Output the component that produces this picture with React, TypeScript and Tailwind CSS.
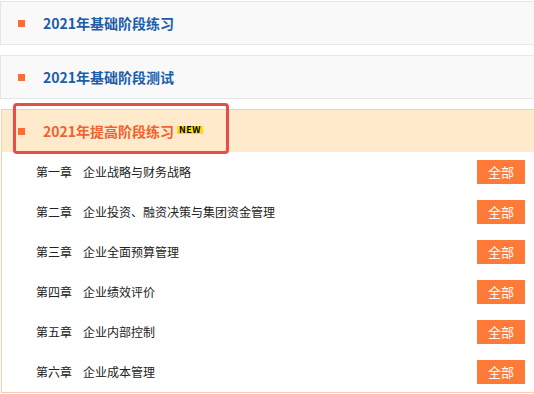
const chapters = [
  ['第一章', '企业战略与财务战略'],
  ['第二章', '企业投资、融资决策与集团资金管理'],
  ['第三章', '企业全面预算管理'],
  ['第四章', '企业绩效评价'],
  ['第五章', '企业内部控制'],
  ['第六章', '企业成本管理'],
];

const font = { fontFamily: '"Microsoft YaHei", "Noto Sans CJK SC", "Liberation Sans", sans-serif' };

function Panel({ title }: { title: string }) {
  return (
    <div className="flex h-[44px] items-center border-y border-l border-[#e6e6e6] bg-[#f9f9f9]">
      <span className="ml-[17px] h-[7px] w-[7px] bg-[#ff6a36]" />
      <span className="ml-[18px] text-[14px] font-bold text-[#1c5daa]">{title}</span>
    </div>
  );
}

export default function App() {
  return (
    <div className="w-[534px] overflow-hidden bg-white pt-px" style={font}>
      <Panel title="2021年基础阶段练习" />
      <div className="h-[10px]" />
      <Panel title="2021年基础阶段测试" />
      <div className="h-[10px]" />
      <div className="ml-px border-y border-l border-[#fbcdae]">
        <div className="relative flex h-[42px] items-center bg-[#ffebcc]">
          <span className="ml-[16px] h-[7px] w-[7px] bg-[#ff6a36]" />
          <span className="ml-[18px] text-[14px] font-bold text-[#f2622e]">2021年提高阶段练习</span>
          <span className="ml-[3px] mt-[-3px] bg-[#ffe000] px-[2px] text-[9px] font-bold leading-[8px] tracking-[0.5px] text-black">NEW</span>
          <div className="absolute left-[11px] top-[-7px] h-[51px] w-[216px] rounded-[4px] border-[3px] border-[#ea4b4b]" />
        </div>
        <div className="flex flex-col">
          {chapters.map(([no, name]) => (
            <div key={no} className="flex h-[40px] items-center pl-[34px] pr-[9px] text-[12px] text-[#222]">
              <span>{no}</span>
              <span className="ml-[11px]">{name}</span>
              <button className="ml-auto h-[24px] w-[48px] bg-[#ff7a36] text-[13px] text-white">全部</button>
            </div>
          ))}
        </div>
      </div>
    </div>
  );
}
